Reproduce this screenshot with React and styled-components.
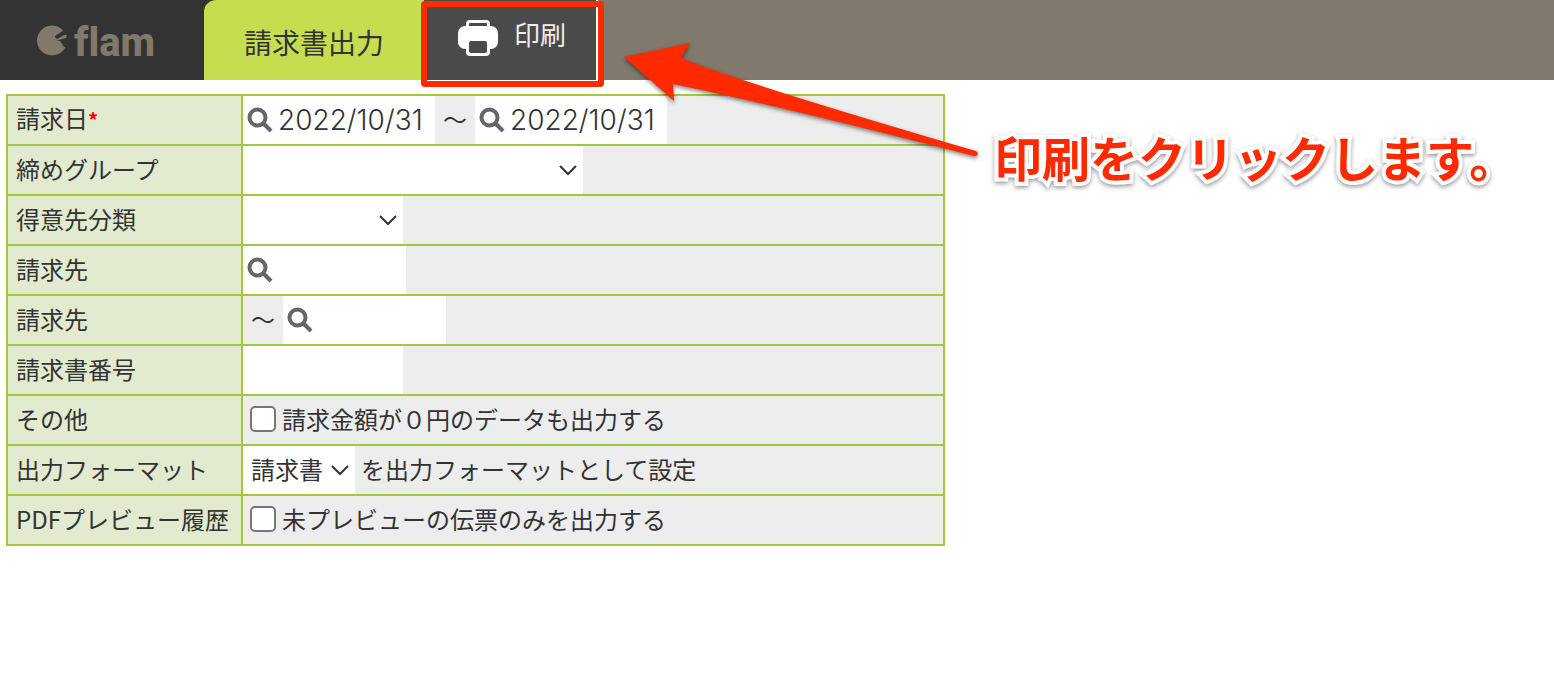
import React from 'react'
import styled, { createGlobalStyle } from 'styled-components'

const GlobalStyle = createGlobalStyle`
  * {
    box-sizing: border-box;
  }
  body {
    margin: 0;
    background: #fff;
    color: #333;
    font-family: 'Noto Sans CJK JP', sans-serif;
    font-size: 24px;
    line-height: 36px;
  }
`
const Header = styled.header`
  display: flex;
  height: 80px;
  background: #82796d;
`
const Brand = styled.a`
  display: flex;
  align-items: center;
  gap: 6px;
  width: 204px;
  padding-left: 36px;
  background: #333;
  color: #82796d;
  font-family: Roboto, sans-serif;
  font-size: 40px;
  font-weight: 800;
  font-variant-ligatures: none;
  text-decoration: none;
`
const BrandName = styled.span`
  padding-top: 6px;
`
const TabSlot = styled.div`
  background: #333;
`
const Tab = styled.h1`
  display: flex;
  align-items: center;
  height: 80px;
  margin: 0;
  padding: 4px 40px 0;
  border-radius: 12px 0 0 0;
  background: #c5dd4f;
  font-size: 28px;
  font-weight: 400;
`
const PrintSlot = styled.div`
  position: relative;
  border-right: 2px solid #fff;
`
const PrintButton = styled.button`
  display: flex;
  gap: 16px;
  width: 172px;
  height: 80px;
  padding: 18px 0 0 34px;
  border: 0;
  background: #4a4a4a;
  color: #eee;
  font: inherit;
  font-size: 26px;
  line-height: 32px;
  text-align: left;
`
const Frame = styled.div`
  position: absolute;
  top: 1px;
  left: -3px;
  width: 183px;
  height: 86px;
  border: 6px solid #ff2a00;
  border-radius: 4px;
  pointer-events: none;
`
const Arrow = styled.svg`
  position: absolute;
  top: 30px;
  left: 190px;
  pointer-events: none;
  filter: drop-shadow(0 2px 2px rgba(0, 0, 0, 0.5));
`
const Note = styled.p`
  position: absolute;
  top: 120px;
  left: 570px;
  margin: 0;
  color: #ff2a00;
  font-size: 48px;
  font-weight: 700;
  line-height: 72px;
  white-space: nowrap;
  paint-order: stroke fill;
  -webkit-text-stroke: 8px #fff;
  filter: drop-shadow(0 2px 2px rgba(0, 0, 0, 0.4));
  pointer-events: none;
`
const Main = styled.main`
  padding: 14px 6px;
`
const Table = styled.table`
  width: 100%;
  max-width: 939px;
  border-collapse: collapse;
`
const Label = styled.th`
  width: 235px;
  padding: 0 8px 2px;
  border: 2px solid #a3c73d;
  background: #e2ebcf;
  font-weight: 400;
  text-align: left;
  white-space: nowrap;
`
const Required = styled.span`
  color: #f00;
  font-size: 20px;
  font-weight: 700;
`
const Value = styled.td`
  padding: 0;
  border: 2px solid #a3c73d;
  background: #ededed;
`
const Line = styled.div`
  display: flex;
  align-items: center;
  height: 48px;
`
const Tilde = styled.span`
  padding: 0 8px 2px;
`
const SearchBox = styled.div`
  display: flex;
  align-items: center;
  width: ${props => (props.$wide ? '192px' : '163px')};
  height: 48px;
  padding-left: 4px;
  background: #fff;
`
const SearchButton = styled.button`
  display: flex;
  padding: 0;
  border: 0;
  background: none;
`
const Input = styled.input`
  flex: 1;
  min-width: 0;
  height: 48px;
  padding: 0 0 0 3px;
  border: 0;
  background: #fff;
  color: #333;
  font-family: Inter, sans-serif;
  font-size: 28px;
  font-weight: 300;
`
const NumberInput = styled(Input)`
  flex: none;
  width: 160px;
`
const SelectBox = styled.div`
  position: relative;
  width: ${props => props.$width};
`
const Select = styled.select`
  display: block;
  width: 100%;
  height: 48px;
  padding: 0 8px 2px;
  border: 0;
  border-radius: 0;
  background: #fff;
  color: #333;
  font: inherit;
  appearance: none;
`
const Chevron = styled.svg`
  position: absolute;
  top: 17px;
  right: 5px;
  pointer-events: none;
`
const Suffix = styled.span`
  padding: 0 0 2px 6px;
`
const Check = styled.label`
  display: flex;
  align-items: center;
  gap: 6px;
  padding: 0 0 2px 7px;
`
const Checkbox = styled.input`
  width: 26px;
  height: 26px;
  margin: 0;
  border: 2px solid #767676;
  border-radius: 5px;
  background: #fff;
  appearance: none;
  &:checked {
    background: #767676;
  }
`

function LogoMark() {
  return (
    <svg width="32" height="32" viewBox="0 0 32 32" aria-hidden="true">
      <circle cx="16" cy="16.500" r="15" fill="#82796d" />
      <path d="M19 12L28 6H32V25L27 22L24 17L19 16Z" fill="#333" />
      <path d="M18 12L19 17L30 14L31 11L28 11L21 15Z" fill="#82796d" />
      <path d="M18 16L23 17L27 21L22 25Z" fill="#82796d" />
    </svg>
  )
}

function PrinterIcon() {
  return (
    <svg width="40" height="40" viewBox="0 0 40 40" aria-hidden="true">
      <path d="M8 8V6a4 4 0 0 1 4-4h16a4 4 0 0 1 4 4v2h-3V6q0-1-1-1H12q-1 0-1 1v2z" fill="#fff" />
      <rect x="0" y="8" width="40" height="23" rx="7" fill="#fff" />
      <rect x="8" y="16" width="24" height="22" rx="4" fill="#fff" />
      <rect x="11" y="23" width="18" height="12" rx="2" fill="#4a4a4a" />
    </svg>
  )
}

function SearchIcon() {
  return (
    <svg width="28" height="28" viewBox="0 0 28 28" fill="none" stroke="#666" aria-hidden="true">
      <circle cx="10.500" cy="11.500" r="8" strokeWidth="4" />
      <path d="M16.500 17.500L24 25" strokeWidth="4" />
    </svg>
  )
}

function Search({ label, value, wide }) {
  return (
    <SearchBox $wide={wide}>
      <SearchButton type="button" aria-label={label + 'を検索'}>
        <SearchIcon />
      </SearchButton>
      <Input aria-label={label} defaultValue={value} />
    </SearchBox>
  )
}

function Dropdown({ label, width, options }) {
  return (
    <SelectBox $width={width}>
      <Select aria-label={label}>
        {options.map(option => (
          <option key={option}>{option}</option>
        ))}
      </Select>
      <Chevron width="20" height="14" viewBox="0 0 20 14" fill="none">
        <path d="M2 3L10 11L18 3" stroke="#333" strokeWidth="2" />
      </Chevron>
    </SelectBox>
  )
}

function Row({ label, required, children }) {
  return (
    <tr>
      <Label scope="row">
        {label}
        {required && <Required>*</Required>}
      </Label>
      <Value>
        <Line>{children}</Line>
      </Value>
    </tr>
  )
}

function PrintGuide() {
  return (
    <>
      <Frame />
      <Arrow width="370" height="136" viewBox="614 30 370 136" aria-hidden="true">
        <path
          d="M624 57L690 43L681 58Q740 82 976 151A2.500 2.500 0 0 1 974 156Q780 106 673 84L674 101Z"
          fill="#ff2a00"
        />
      </Arrow>
      <Note>印刷をクリックします。</Note>
    </>
  )
}

export default function App() {
  return (
    <>
      <GlobalStyle />
      <Header>
        <Brand href="#">
          <LogoMark />
          <BrandName>flam</BrandName>
        </Brand>
        <TabSlot>
          <Tab>請求書出力</Tab>
        </TabSlot>
        <PrintSlot>
          <PrintButton type="button">
            <PrinterIcon />
            印刷
          </PrintButton>
          <PrintGuide />
        </PrintSlot>
      </Header>
      <Main>
        <Table>
          <tbody>
            <Row label="請求日" required>
              <Search label="請求日(開始)" value="2022/10/31" wide />
              <Tilde>〜</Tilde>
              <Search label="請求日(終了)" value="2022/10/31" wide />
            </Row>
            <Row label="締めグループ">
              <Dropdown label="締めグループ" width="340px" options={['']} />
            </Row>
            <Row label="得意先分類">
              <Dropdown label="得意先分類" width="160px" options={['']} />
            </Row>
            <Row label="請求先">
              <Search label="請求先(開始)" />
            </Row>
            <Row label="請求先">
              <Tilde>〜</Tilde>
              <Search label="請求先(終了)" />
            </Row>
            <Row label="請求書番号">
              <NumberInput aria-label="請求書番号" />
            </Row>
            <Row label="その他">
              <Check>
                <Checkbox type="checkbox" />
                請求金額が{'\uff10'}円のデータも出力する
              </Check>
            </Row>
            <Row label="出力フォーマット">
              <Dropdown label="出力フォーマット" width="112px" options={['請求書']} />
              <Suffix>を出力フォーマットとして設定</Suffix>
            </Row>
            <Row label="PDFプレビュー履歴">
              <Check>
                <Checkbox type="checkbox" />
                未プレビューの伝票のみを出力する
              </Check>
            </Row>
          </tbody>
        </Table>
      </Main>
    </>
  )
}
